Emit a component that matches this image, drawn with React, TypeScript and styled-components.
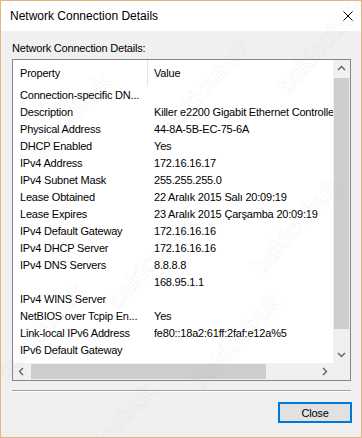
import React from "react";
import styled, { createGlobalStyle } from "styled-components";

const GlobalStyle = createGlobalStyle`
  html, body { margin: 0; padding: 0; background: #fff; }
  body { font-family: "Liberation Sans", Arial, sans-serif; }
`;

const Window = styled.div`
  position: relative;
  width: 362px;
  height: 438px;
  box-sizing: border-box;
  border: 1px solid #e8b47c;
  display: flex;
  flex-direction: column;
  background: #f0f0f0;
  overflow: hidden;
  color: #000;
`;

const TitleBar = styled.div`
  height: 30px;
  flex: none;
  background: #fff;
  display: flex;
  align-items: center;
  justify-content: space-between;
  padding: 0 8px 0 9px;
  font-size: 12px;
`;

const CloseX = styled.svg`
  width: 10px;
  height: 10px;
  display: block;
`;

const Body = styled.div`
  flex: 1;
  display: flex;
  flex-direction: column;
  padding: 0 10px 0 11px;
  font-size: 11px;
  letter-spacing: -0.2px;
`;

const Label = styled.div`
  margin-top: 10px;
  line-height: 14px;
  height: 14px;
`;

const ListBox = styled.div`
  margin-top: 4px;
  height: 322px;
  box-sizing: border-box;
  border: 1px solid #828790;
  background: #fff;
  display: grid;
  grid-template-columns: 1fr 17px;
  grid-template-rows: 1fr 17px;
`;

const Viewport = styled.div`
  overflow: hidden;
  position: relative;
`;

const HeaderRow = styled.div`
  display: flex;
  height: 26px;
  align-items: stretch;
`;

const HeadCell = styled.div<{ $w?: number }>`
  ${(p) => (p.$w ? `width: ${p.$w}px; flex: none;` : "flex: 1;")}
  display: flex;
  align-items: center;
  padding-left: ${(p) => (p.$w ? 7 : 6)}px;
  box-sizing: border-box;
  white-space: nowrap;
`;

const HeadDivider = styled.div`
  width: 1px;
  flex: none;
  background: #e5e5e5;
`;

const Row = styled.div`
  display: flex;
  height: 17px;
  align-items: center;
  white-space: nowrap;
`;

const PropCell = styled.div`
  width: 135px;
  flex: none;
  box-sizing: border-box;
  padding-left: 7px;
  overflow: hidden;
`;

const ValueCell = styled.div`
  padding-left: 6px;
`;

const VScroll = styled.div`
  background: #f0f0f0;
  display: flex;
  flex-direction: column;
`;

const HScroll = styled.div`
  background: #f0f0f0;
  display: flex;
  align-items: stretch;
`;

const Corner = styled.div`
  background: #f0f0f0;
`;

const ArrowBtn = styled.div`
  width: 17px;
  height: 17px;
  flex: none;
  display: flex;
  align-items: center;
  justify-content: center;
`;

const VTrack = styled.div`
  flex: 1;
  display: flex;
  flex-direction: column;
  padding: 1px 1px 0 1px;
`;

const VThumb = styled.div`
  height: 251px;
  background: #cdcdcd;
`;

const HTrack = styled.div`
  flex: 1;
  display: flex;
  padding: 1px 0 1px 1px;
`;

const HThumb = styled.div`
  width: 235px;
  background: #cdcdcd;
`;

const Separator = styled.div`
  margin-top: 9px;
  height: 0;
  border-top: 1px solid #a0a0a0;
  border-bottom: 1px solid #ffffff;
`;

const ButtonRow = styled.div`
  margin-top: 10px;
  display: flex;
  justify-content: flex-end;
`;

const Button = styled.button`
  width: 74px;
  height: 21px;
  box-sizing: border-box;
  border: 2px solid #0078d7;
  background: #e1e1e1;
  font-family: "Liberation Sans", Arial, sans-serif;
  font-size: 11px;
  letter-spacing: -0.2px;
  color: #000;
  padding: 0;
  margin-right: -1px;
`;

const Overlay = styled.div`
  position: absolute;
  inset: 0;
  pointer-events: none;
  overflow: hidden;
`;

const Mark = styled.span`
  position: absolute;
  transform: translate(-50%, -50%) rotate(-48deg);
  font-family: "Liberation Sans", Arial, sans-serif;
  font-weight: bold;
  font-size: 24px;
  color: transparent;
  -webkit-text-stroke: 0.6px rgba(160, 160, 160, 0.16);
  white-space: nowrap;
  letter-spacing: 0;
`;

const Chevron = ({ dir }: { dir: "up" | "down" | "left" | "right" }) => {
  const rot = { up: 0, right: 90, down: 180, left: 270 }[dir];
  return (
    <svg width="9" height="9" viewBox="0 0 9 9" style={{ transform: `rotate(${rot}deg)` }}>
      <path d="M1 6 L4.5 2.5 L8 6" fill="none" stroke="#606060" strokeWidth="1.4" />
    </svg>
  );
};

const rows: [string, string][] = [
  ["Connection-specific DN...", ""],
  ["Description", "Killer e2200 Gigabit Ethernet Controller"],
  ["Physical Address", "44-8A-5B-EC-75-6A"],
  ["DHCP Enabled", "Yes"],
  ["IPv4 Address", "172.16.16.17"],
  ["IPv4 Subnet Mask", "255.255.255.0"],
  ["Lease Obtained", "22 Aralık 2015 Salı 20:09:19"],
  ["Lease Expires", "23 Aralık 2015 Çarşamba 20:09:19"],
  ["IPv4 Default Gateway", "172.16.16.16"],
  ["IPv4 DHCP Server", "172.16.16.16"],
  ["IPv4 DNS Servers", "8.8.8.8"],
  ["", "168.95.1.1"],
  ["IPv4 WINS Server", ""],
  ["NetBIOS over Tcpip En...", "Yes"],
  ["Link-local IPv6 Address", "fe80::18a2:61ff:2faf:e12a%5"],
  ["IPv6 Default Gateway", ""],
  ["IPv6 DNS Servers", ""],
];

const marks: [number, number][] = [
  [65, 120],
  [205, 85],
  [320, 45],
  [150, 260],
  [295, 225],
  [40, 330],
  [235, 340],
  [110, 430],
];

export default function App() {
  return (
    <>
      <GlobalStyle />
      <Window>
        <TitleBar>
          <span>Network Connection Details</span>
          <CloseX viewBox="0 0 10 10">
            <path d="M0.5 0.5 L9.5 9.5 M9.5 0.5 L0.5 9.5" stroke="#000" strokeWidth="1" />
          </CloseX>
        </TitleBar>
        <Body>
          <Label>Network Connection Details:</Label>
          <ListBox>
            <Viewport>
              <HeaderRow>
                <HeadCell $w={134}>Property</HeadCell>
                <HeadDivider />
                <HeadCell>Value</HeadCell>
              </HeaderRow>
              {rows.map(([p, v], i) => (
                <Row key={i}>
                  <PropCell>{p}</PropCell>
                  <ValueCell>{v}</ValueCell>
                </Row>
              ))}
            </Viewport>
            <VScroll>
              <ArrowBtn>
                <Chevron dir="up" />
              </ArrowBtn>
              <VTrack>
                <VThumb />
              </VTrack>
              <ArrowBtn>
                <Chevron dir="down" />
              </ArrowBtn>
            </VScroll>
            <HScroll>
              <ArrowBtn>
                <Chevron dir="left" />
              </ArrowBtn>
              <HTrack>
                <HThumb />
              </HTrack>
              <ArrowBtn>
                <Chevron dir="right" />
              </ArrowBtn>
            </HScroll>
            <Corner />
          </ListBox>
          <Separator />
          <ButtonRow>
            <Button>Close</Button>
          </ButtonRow>
        </Body>
        <Overlay>
          {marks.map(([x, y], i) => (
            <Mark key={i} style={{ left: x, top: y }}>
              bakicubuk
            </Mark>
          ))}
        </Overlay>
      </Window>
    </>
  );
}
